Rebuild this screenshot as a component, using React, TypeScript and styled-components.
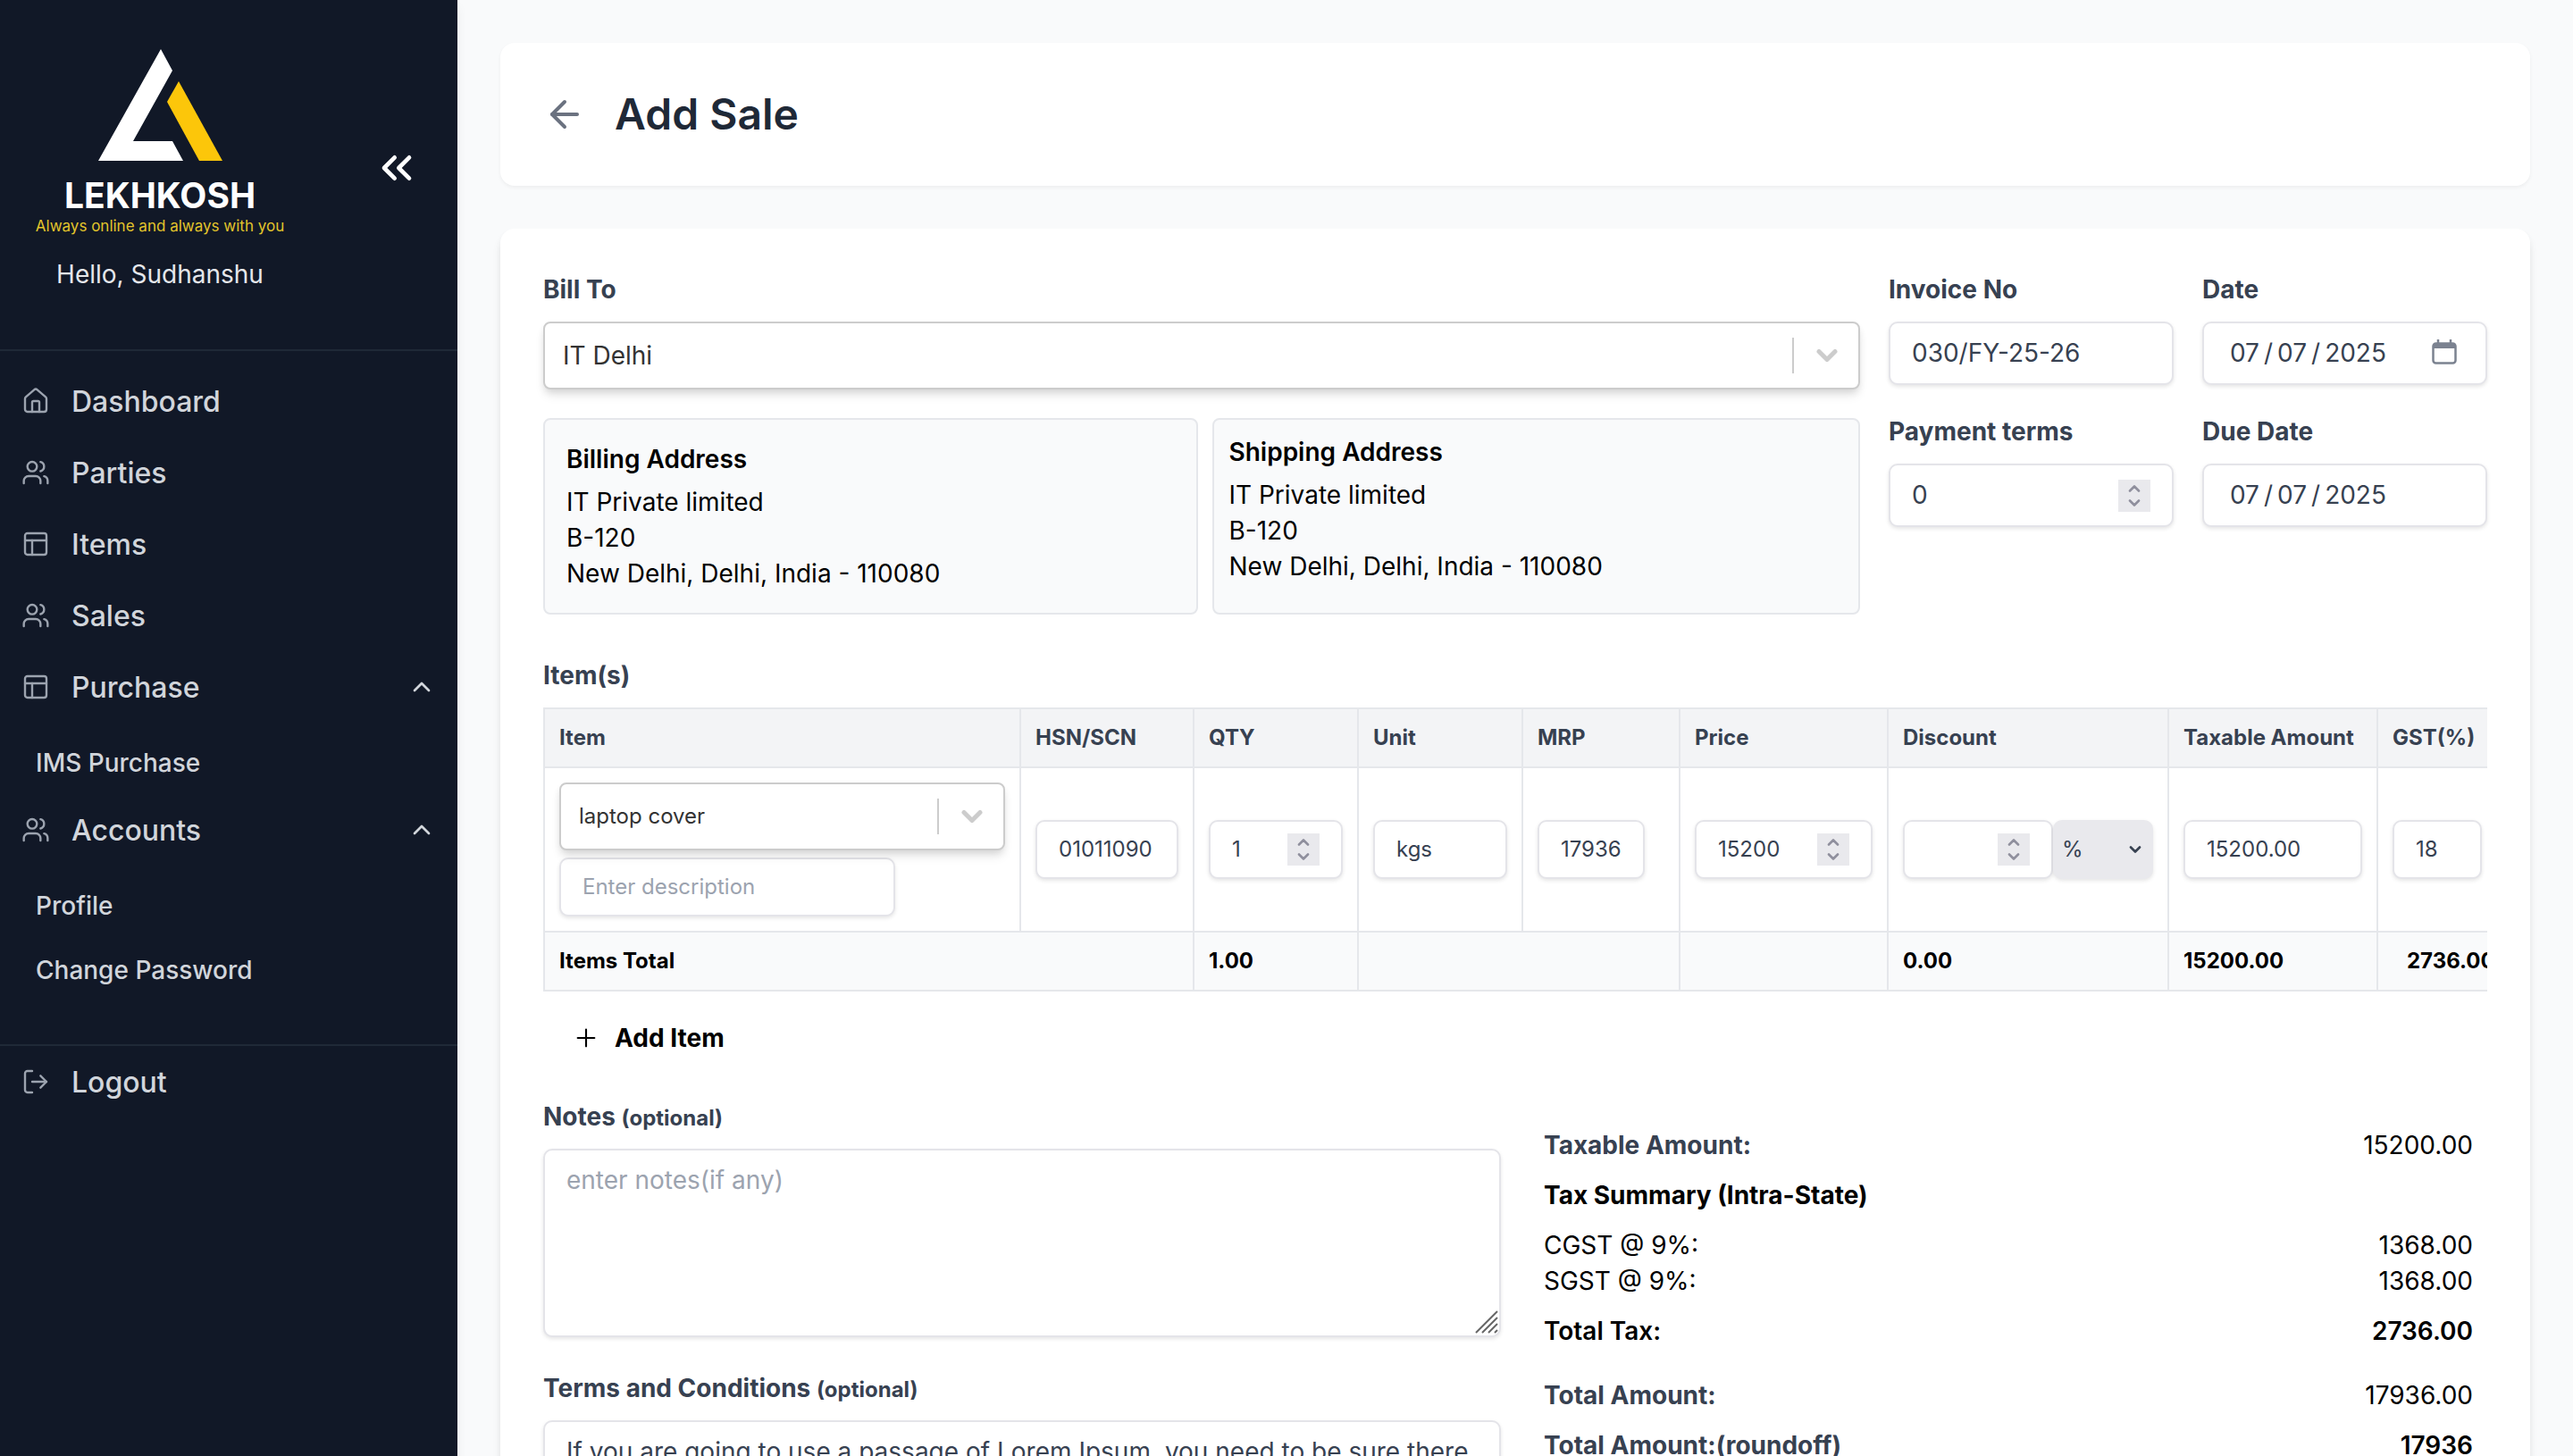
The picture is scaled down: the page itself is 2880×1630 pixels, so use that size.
import React, { useId } from "react";
import styled, { createGlobalStyle, css } from "styled-components";
import {
  ArrowLeft,
  ChevronsLeft,
  ChevronUp,
  House,
  LogOut,
  PanelsTopLeft,
  Plus,
  Users,
} from "lucide-react";

const colors = {
  navy: "#111827",
  navyLine: "#1f2937",
  navText: "#d1d5db",
  navIcon: "#9ca3af",
  page: "#f9fafb",
  headBg: "#f3f4f6",
  line: "#e5e7eb",
  field: "#e4e4e9",
  control: "#cccccc",
  chip: "#e9e9ed",
  label: "#374151",
  title: "#1f2937",
  placeholder: "#9ca3af",
};

const GlobalStyle = createGlobalStyle`
  *, *::before, *::after { box-sizing: border-box; }
  body {
    margin: 0;
    background: ${colors.page};
    color: #000;
    font-family: Inter, "Noto Sans", sans-serif;
    font-size: 28px;
    line-height: 40px;
  }
  h1, h2, h3, p, ul { margin: 0; padding: 0; }
  ul { list-style: none; }
  input, select, textarea, button { font: inherit; color: inherit; }
  button { background: none; border: 0; padding: 0; cursor: pointer; }
`;

/* ---------- Shell ---------- */

const Shell = styled.div`
  display: flex;
  height: 100vh;
  overflow: hidden;
`;

const Sidebar = styled.aside`
  flex: 0 0 512px;
  z-index: 1;
  background: ${colors.navy};
  color: ${colors.navText};
  box-shadow: 0 8px 12px rgba(0, 0, 0, 0.06);
  overflow-y: auto;
  scrollbar-width: none;
`;

const SidebarHeader = styled.header`
  display: flex;
  align-items: center;
  padding: 48px 0 64px;
  border-bottom: 2px solid ${colors.navyLine};
`;

const Brand = styled.div`
  width: 358px;
  display: flex;
  flex-direction: column;
  align-items: center;
`;

const Wordmark = styled.span`
  margin-top: 18px;
  color: #fff;
  font-size: 39px;
  font-weight: 700;
  line-height: 40px;
`;

const Tagline = styled.span`
  color: #e3c52b;
  font-size: 17px;
  line-height: 28px;
  white-space: nowrap;
`;

const Greeting = styled.p`
  margin-top: 20px;
  color: #e5e7eb;
`;

const CollapseButton = styled.button`
  display: flex;
  margin-left: 58px;
  color: #fff;
`;

const NavList = styled.ul`
  padding: 16px 0 48px;
`;

const SubList = styled.ul`
  padding-top: 8px;
`;

const navRow = css`
  display: flex;
  align-items: center;
  width: 100%;
  height: 80px;
  padding: 0 24px;
  color: ${colors.navText};
  font-size: 32px;
  font-weight: 500;
  text-decoration: none;
`;

const NavLink = styled.a`
  ${navRow}
`;

const NavButton = styled.button`
  ${navRow}
`;

const NavLabel = styled.span`
  flex: 1;
  margin-left: 24px;
  padding-top: 2px;
  text-align: left;
`;

const SubLink = styled.a`
  display: flex;
  align-items: center;
  height: 72px;
  padding: 2px 40px 0;
  color: ${colors.navText};
  font-weight: 500;
  text-decoration: none;
`;

const SidebarFooter = styled.footer`
  border-top: 2px solid ${colors.navyLine};
`;

const Main = styled.main`
  flex: 1;
  min-width: 0;
  padding: 48px;
  overflow-y: auto;
  scrollbar-width: none;
`;

const TitleBar = styled.header`
  display: flex;
  align-items: center;
  gap: 32px;
  height: 160px;
  padding: 0 48px;
  background: #fff;
  border-radius: 16px;
  box-shadow: 0 2px 4px rgba(0, 0, 0, 0.05);
`;

const BackButton = styled.button`
  display: flex;
  color: #6b7280;
`;

const Title = styled.h1`
  color: ${colors.title};
  font-size: 48px;
  font-weight: 600;
  line-height: 64px;
`;

const FormCard = styled.form`
  margin-top: 48px;
  padding: 48px;
  background: #fff;
  border-radius: 16px;
  box-shadow: 0 8px 12px -2px rgba(0, 0, 0, 0.1), 0 4px 8px -2px rgba(0, 0, 0, 0.06);
`;

/* ---------- Fields ---------- */

const Label = styled.label`
  display: block;
  margin-bottom: 16px;
  color: ${colors.label};
  font-weight: 700;
`;

const Optional = styled.span`
  font-size: 24px;
  line-height: 24px;
`;

const fieldFrame = css<{ $small?: boolean }>`
  width: 100%;
  padding: 16px 24px;
  background: #fff;
  border: 2px solid ${colors.field};
  border-radius: 10px;
  box-shadow: 0 2px 4px rgba(0, 0, 0, 0.1);
  color: ${colors.label};
  font-size: ${(p) => (p.$small ? 24 : 28)}px;
  line-height: ${(p) => (p.$small ? 30 : 35)}px;
`;

const FieldShell = styled.div<{ $small?: boolean; $width?: number }>`
  ${fieldFrame}
  display: flex;
  align-items: center;
  ${(p) => p.$width && `width: ${p.$width}px;`}
`;

const BareInput = styled.input<{ $small?: boolean }>`
  flex: 1;
  min-width: 0;
  width: 0;
  height: ${(p) => (p.$small ? 30 : 35)}px;
  padding: 0;
  border: 0;
  outline: 0;
  background: transparent;
  appearance: textfield;

  &::placeholder { color: ${colors.placeholder}; opacity: 1; }
  &::-webkit-inner-spin-button,
  &::-webkit-calendar-picker-indicator { display: none; }
  &::-webkit-datetime-edit { padding: 0 4px; }
  &::-webkit-datetime-edit-fields-wrapper { padding: 0; }
  &::-webkit-datetime-edit-text { padding: 0 4px; }
`;

const Stepper = styled.span`
  flex: 0 0 36px;
  height: 36px;
  margin: -3px 0;
  display: flex;
  flex-direction: column;
  align-items: center;
  justify-content: center;
  gap: 8px;
  background: ${colors.chip};
  color: #8f8f9d;

  button { display: flex; }
`;

const CalendarButton = styled.button`
  display: flex;
  margin: -4px 8px 0 0;
  color: #7b8290;
`;

const SelectShell = styled.div<{ $small?: boolean }>`
  display: flex;
  align-items: center;
  height: 76px;
  position: relative;
  background: #fff;
  border: 2px solid ${colors.control};
  border-radius: 8px;
  box-shadow: 0 8px 12px -2px rgba(0, 0, 0, 0.1), 0 4px 8px -2px rgba(0, 0, 0, 0.1);
  font-size: ${(p) => (p.$small ? 24 : 28)}px;
`;

const BareSelect = styled.select`
  width: 100%;
  height: 100%;
  padding: 0 96px 0 20px;
  border: 0;
  outline: 0;
  appearance: none;
  background: transparent;
  color: #333;
`;

const SelectMarks = styled.span`
  position: absolute;
  inset: 16px 22px 16px auto;
  display: flex;
  align-items: center;
  padding-left: 24px;
  border-left: 2px solid ${colors.control};
  color: ${colors.control};
  pointer-events: none;
`;

const UnitSelectShell = styled.span`
  position: relative;
  flex: 0 0 112px;
  display: flex;
  align-items: center;
  height: 66px;
  background: ${colors.chip};
  border-radius: 10px;
  box-shadow: 0 2px 4px rgba(0, 0, 0, 0.1);
  color: ${colors.label};

  select {
    width: 100%;
    height: 100%;
    padding: 0 32px 0 10px;
    border: 0;
    appearance: none;
    background: transparent;
  }
  svg {
    position: absolute;
    right: 13px;
    pointer-events: none;
  }
`;

const TextAreaShell = styled.div`
  position: relative;
  display: flex;

  & + label { margin-top: 37px; }
`;

const TextArea = styled.textarea`
  ${fieldFrame}
  display: block;
  resize: vertical;
  outline: 0;
  scrollbar-width: none;

  &::placeholder { color: ${colors.placeholder}; opacity: 1; }
  &::-webkit-resizer { display: none; }
`;

const Grip = styled.svg`
  position: absolute;
  right: 3px;
  bottom: 4px;
  color: #666;
  pointer-events: none;
`;

/* ---------- Bill-to section ---------- */

const TopGrid = styled.section`
  display: grid;
  grid-template-columns: minmax(0, 11fr) minmax(0, 5fr);
  gap: 32px;
  align-items: start;
`;

const MetaGrid = styled.div`
  display: grid;
  grid-template-columns: 1fr 1fr;
  gap: 32px;
`;

const AddressGrid = styled.div`
  display: grid;
  grid-template-columns: 734fr 725fr;
  gap: 16px;
  margin-top: 32px;
`;

const AddressBox = styled.address<{ $pad: number }>`
  padding: ${(p) => p.$pad}px;
  background: ${colors.page};
  border: 2px solid ${colors.line};
  border-radius: 8px;
  font-style: normal;
`;

const AddressTitle = styled.h3`
  margin-bottom: 8px;
  font-size: 28px;
  font-weight: 600;
`;

/* ---------- Items table ---------- */

const SectionTitle = styled.h2`
  margin: 48px 0 16px;
  color: ${colors.label};
  font-size: 28px;
  font-weight: 700;
`;

const TableScroll = styled.div`
  overflow-x: auto;
  scrollbar-width: none;
`;

const Table = styled.table`
  width: 100%;
  table-layout: fixed;
  border-collapse: collapse;
  font-size: 24px;
  line-height: 32px;

  th, td {
    padding: 16px;
    border: 2px solid ${colors.line};
    text-align: left;
    white-space: nowrap;
  }
  th {
    background: ${colors.headBg};
    color: ${colors.label};
    font-weight: 700;
  }
  tfoot td {
    background: ${colors.page};
    font-weight: 700;
  }
  tfoot td:last-child { padding-left: 32px; }
`;

const ItemStack = styled.div`
  display: flex;
  flex-direction: column;
  gap: 8px;
`;

const DiscountGroup = styled.div`
  display: flex;
`;

const AddItem = styled.button`
  display: flex;
  align-items: center;
  gap: 16px;
  margin: 16px 0 0;
  padding: 16px 32px;
  font-weight: 700;
`;

/* ---------- Footer section ---------- */

const BottomGrid = styled.section`
  display: grid;
  grid-template-columns: 1fr 1fr;
  gap: 32px;
  margin-top: 32px;
`;

const Summary = styled.div`
  padding: 32px 16px 0;
`;

const SummaryRow = styled.div<{ $tone?: "muted" | "heading" | "strong"; $gap?: number }>`
  display: flex;
  justify-content: space-between;
  margin-top: ${(p) => p.$gap ?? 0}px;

  span:first-child {
    color: ${(p) => (p.$tone === "muted" ? colors.label : "#000")};
    font-weight: ${(p) => (p.$tone === "strong" ? 600 : p.$tone ? 700 : 400)};
  }
  span:last-child:not(:first-child) {
    font-weight: ${(p) => (p.$tone === "strong" ? 600 : 400)};
  }
  strong { font-weight: 600; }
`;

/* ---------- Drawings ---------- */

const Logo = () => (
  <svg width="139" height="133" viewBox="110 48 139 133" role="img" aria-label="Lekhkosh logo">
    <path d="M180 55 L193 79 L149 158 H193 L205 180 H110 Z" fill="#fff" />
    <path d="M200 91 L249 180 H223 L187 114 Z" fill="#fcc60a" />
  </svg>
);

const SmallChevron = ({ up }: { up?: boolean }) => (
  <svg width="14" height="8" viewBox="0 0 14 8" fill="none" stroke="currentColor" strokeWidth="2.6" strokeLinecap="round" strokeLinejoin="round">
    <path d={up ? "M2 6.5 L7 1.5 L12 6.5" : "M2 1.5 L7 6.5 L12 1.5"} />
  </svg>
);

const SelectArrow = () => (
  <svg width="26" height="16" viewBox="0 0 26 16" fill="none" stroke="currentColor" strokeWidth="5" strokeLinecap="round" strokeLinejoin="round">
    <path d="M4 3.5 L13 12.5 L22 3.5" />
  </svg>
);

const CalendarIcon = () => (
  <svg width="28" height="28" viewBox="0 0 28 28" fill="none" stroke="currentColor" strokeWidth="2.5" strokeLinejoin="round">
    <rect x="1.5" y="4.5" width="25" height="22" rx="3" />
    <path d="M2 5h24v5H2z" fill="currentColor" stroke="none" />
    <path d="M7 0v5M21 0v5" />
  </svg>
);

const GripIcon = () => (
  <Grip width="26" height="26" viewBox="0 0 26 26" stroke="currentColor" strokeWidth="2">
    <path d="M1 25 L25 1 M8 25 L25 8 M15 25 L25 15 M22 25 L25 22" />
  </Grip>
);

/* ---------- Composed controls ---------- */

type FieldProps = {
  label?: string;
  name?: string;
  type?: "text" | "number" | "date";
  value?: string;
  placeholder?: string;
  small?: boolean;
  width?: number;
  picker?: boolean;
};

const Field = ({ label, name, type = "text", value, placeholder, small, width, picker }: FieldProps) => {
  const id = useId();
  return (
    <div>
      {label && <Label htmlFor={id}>{label}</Label>}
      <FieldShell $small={small} $width={width}>
        <BareInput id={id} type={type} defaultValue={value} placeholder={placeholder} aria-label={name} $small={small} />
        {type === "number" && (
          <Stepper>
            <button type="button" aria-label="Increase"><SmallChevron up /></button>
            <button type="button" aria-label="Decrease"><SmallChevron /></button>
          </Stepper>
        )}
        {picker && (
          <CalendarButton type="button" aria-label="Open calendar"><CalendarIcon /></CalendarButton>
        )}
      </FieldShell>
    </div>
  );
};

const SelectBox = ({ id, name, option, small }: { id?: string; name?: string; option: string; small?: boolean }) => (
  <SelectShell $small={small}>
    <BareSelect id={id} aria-label={name}>
      <option>{option}</option>
    </BareSelect>
    <SelectMarks><SelectArrow /></SelectMarks>
  </SelectShell>
);

const NavIcon = ({ icon: Icon }: { icon: React.ElementType }) => (
  <Icon size={32} strokeWidth={1.8} color={colors.navIcon} />
);

const links = [
  { label: "Dashboard", icon: House },
  { label: "Parties", icon: Users },
  { label: "Items", icon: PanelsTopLeft },
  { label: "Sales", icon: Users },
];

const groups = [
  { label: "Purchase", icon: PanelsTopLeft, children: ["IMS Purchase"] },
  { label: "Accounts", icon: Users, children: ["Profile", "Change Password"] },
];

const columns = [
  { title: "Item", width: 533 },
  { title: "HSN/SCN", width: 194 },
  { title: "QTY", width: 184 },
  { title: "Unit", width: 184 },
  { title: "MRP", width: 176 },
  { title: "Price", width: 233 },
  { title: "Discount", width: 314 },
  { title: "Taxable Amount", width: 234 },
  { title: "GST(%)", width: 180 },
];

const addressLines = ["IT Private limited", "B-120", "New Delhi, Delhi, India - 110080"];

const Address = ({ title, pad }: { title: string; pad: number }) => (
  <AddressBox $pad={pad}>
    <AddressTitle>{title}</AddressTitle>
    {addressLines.map((line) => <p key={line}>{line}</p>)}
  </AddressBox>
);

const termsText =
  "If you are going to use a passage of Lorem Ipsum, you need to be sure there isn't anything embarrassing hidden in the middle of text.";

export default function App() {
  return (
    <>
      <GlobalStyle />
      <Shell>
        <Sidebar>
          <SidebarHeader>
            <Brand>
              <Logo />
              <Wordmark>LEKHKOSH</Wordmark>
              <Tagline>Always online and always with you</Tagline>
              <Greeting>Hello, Sudhanshu</Greeting>
            </Brand>
            <CollapseButton type="button" aria-label="Collapse sidebar">
              <ChevronsLeft size={56} strokeWidth={2} />
            </CollapseButton>
          </SidebarHeader>
          <nav>
            <NavList>
              {links.map(({ label, icon }) => (
                <li key={label}>
                  <NavLink href="#"><NavIcon icon={icon} /><NavLabel>{label}</NavLabel></NavLink>
                </li>
              ))}
              {groups.map(({ label, icon, children }) => (
                <li key={label}>
                  <NavButton type="button" aria-expanded="true">
                    <NavIcon icon={icon} />
                    <NavLabel>{label}</NavLabel>
                    <ChevronUp size={32} />
                  </NavButton>
                  <SubList>
                    {children.map((child) => <li key={child}><SubLink href="#">{child}</SubLink></li>)}
                  </SubList>
                </li>
              ))}
            </NavList>
          </nav>
          <SidebarFooter>
            <NavButton type="button"><NavIcon icon={LogOut} /><NavLabel>Logout</NavLabel></NavButton>
          </SidebarFooter>
        </Sidebar>

        <Main>
          <TitleBar>
            <BackButton type="button" aria-label="Back"><ArrowLeft size={48} /></BackButton>
            <Title>Add Sale</Title>
          </TitleBar>

          <FormCard>
            <TopGrid>
              <div>
                <Label htmlFor="bill-to">Bill To</Label>
                <SelectBox id="bill-to" option="IT Delhi" />
                <AddressGrid>
                  <Address title="Billing Address" pad={24} />
                  <Address title="Shipping Address" pad={16} />
                </AddressGrid>
              </div>
              <MetaGrid>
                <Field label="Invoice No" value="030/FY-25-26" />
                <Field label="Date" type="date" value="2025-07-07" picker />
                <Field label="Payment terms" type="number" value="0" />
                <Field label="Due Date" type="date" value="2025-07-07" />
              </MetaGrid>
            </TopGrid>

            <SectionTitle>Item(s)</SectionTitle>
            <TableScroll>
              <Table>
                <colgroup>
                  {columns.map(({ title, width }) => <col key={title} style={{ width }} />)}
                </colgroup>
                <thead>
                  <tr>{columns.map(({ title }) => <th key={title} scope="col">{title}</th>)}</tr>
                </thead>
                <tbody>
                  <tr>
                    <td>
                      <ItemStack>
                        <SelectBox name="Item" option="laptop cover" small />
                        <Field name="Description" placeholder="Enter description" small width={376} />
                      </ItemStack>
                    </td>
                    <td><Field name="HSN/SCN" value="01011090" small /></td>
                    <td><Field name="Quantity" type="number" value="1" small /></td>
                    <td><Field name="Unit" value="kgs" small /></td>
                    <td><Field name="MRP" value="17936" small width={120} /></td>
                    <td><Field name="Price" type="number" value="15200" small /></td>
                    <td>
                      <DiscountGroup>
                        <Field name="Discount" type="number" small width={168} />
                        <UnitSelectShell>
                          <select aria-label="Discount unit"><option>%</option></select>
                          <SmallChevron />
                        </UnitSelectShell>
                      </DiscountGroup>
                    </td>
                    <td><Field name="Taxable amount" value="15200.00" small /></td>
                    <td><Field name="GST" value="18" small width={100} /></td>
                  </tr>
                </tbody>
                <tfoot>
                  <tr>
                    <td colSpan={2}>Items Total</td>
                    <td>1.00</td>
                    <td colSpan={2} />
                    <td />
                    <td>0.00</td>
                    <td>15200.00</td>
                    <td>2736.00</td>
                  </tr>
                </tfoot>
              </Table>
            </TableScroll>

            <AddItem type="button"><Plus size={32} strokeWidth={1.6} />Add Item</AddItem>

            <BottomGrid>
              <div>
                <Label htmlFor="notes">Notes <Optional>(optional)</Optional></Label>
                <TextAreaShell>
                  <TextArea id="notes" rows={5} placeholder="enter notes(if any)" />
                  <GripIcon />
                </TextAreaShell>
                <Label htmlFor="terms">Terms and Conditions <Optional>(optional)</Optional></Label>
                <TextAreaShell>
                  <TextArea id="terms" rows={5} defaultValue={termsText} />
                  <GripIcon />
                </TextAreaShell>
              </div>
              <Summary>
                <SummaryRow $tone="muted"><span>Taxable Amount:</span><span>15200.00</span></SummaryRow>
                <SummaryRow $tone="heading" $gap={16}><span>Tax Summary (Intra-State)</span></SummaryRow>
                <SummaryRow $gap={16}><span>CGST @ 9%:</span><span>1368.00</span></SummaryRow>
                <SummaryRow><span>SGST @ 9%:</span><span>1368.00</span></SummaryRow>
                <SummaryRow $tone="strong" $gap={16}><span>Total Tax:</span><span>2736.00</span></SummaryRow>
                <SummaryRow $tone="muted" $gap={32}><span>Total Amount:</span><span>17936.00</span></SummaryRow>
                <SummaryRow $tone="muted" $gap={16}><span>Total Amount:(roundoff)</span><span><strong>17936</strong></span></SummaryRow>
              </Summary>
            </BottomGrid>
          </FormCard>
        </Main>
      </Shell>
    </>
  );
}
